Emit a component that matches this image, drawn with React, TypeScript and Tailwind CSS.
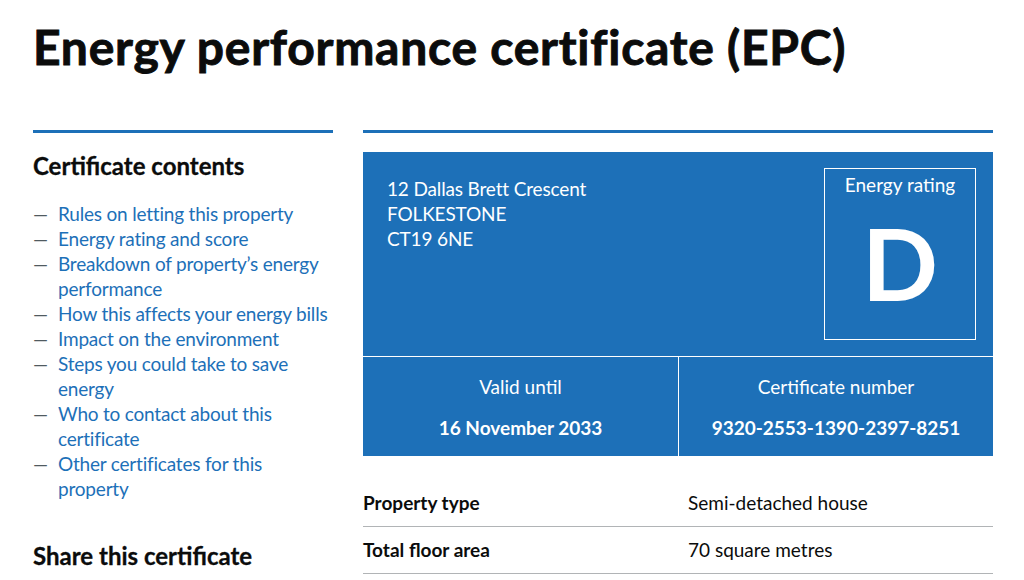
const contents: string[][] = [
  ['Rules on letting this property'],
  ['Energy rating and score'],
  ['Breakdown of property’s energy', 'performance'],
  ['How this affects your energy bills'],
  ['Impact on the environment'],
  ['Steps you could take to save', 'energy'],
  ['Who to contact about this', 'certificate'],
  ['Other certificates for this', 'property'],
]

const summary = [
  { key: 'Property type', value: 'Semi-detached house' },
  { key: 'Total floor area', value: '70 square metres' },
]

export default function App() {
  return (
    <div
      className="h-[580px] w-[1024px] overflow-hidden bg-white text-[#0b0c0c]"
      style={{ fontFamily: 'Lato, "Noto Sans", Arial, sans-serif' }}
    >
      <div className="mx-auto w-[960px] pl-px">
        <h1 className="mt-[22px] text-[48px] font-bold leading-[50px] tracking-[0.75px] [-webkit-text-stroke:0.9px_#0b0c0c]">
          Energy performance certificate (EPC)
        </h1>

        <div className="mt-[58px] flex gap-[30px]">
          <aside className="w-[300px] shrink-0 border-t-[3px] border-[#1d70b8]">
            <h2 className="mt-[18px] text-[24px] font-bold leading-[30px] [-webkit-text-stroke:0.3px_#0b0c0c]">
              Certificate contents
            </h2>
            <ul className="mt-5 text-[19px] leading-[25px] tracking-[-0.2px] text-[#1d70b8]">
              {contents.map((lines) => (
                <li key={lines[0]} className="flex">
                  <span className="w-[25px] shrink-0 text-[#505a5f]">—</span>
                  <a href="#" className="whitespace-nowrap">
                    {lines.map((l, i) => (
                      <span key={i} className="block">
                        {l}
                      </span>
                    ))}
                  </a>
                </li>
              ))}
            </ul>
            <h2 className="mt-10 text-[24px] font-bold leading-[30px] [-webkit-text-stroke:0.3px_#0b0c0c]">
              Share this certificate
            </h2>
          </aside>

          <main className="w-[630px] shrink-0 border-t-[3px] border-[#1d70b8]">
            <div className="mt-[19px] bg-[#1d70b8] text-white">
              <div className="flex h-[205px] justify-between border-b border-white">
                <p className="pl-6 pt-6 text-[19px] leading-[25px] tracking-[-0.15px]">
                  12 Dallas Brett Crescent
                  <br />
                  FOLKESTONE
                  <br />
                  CT19 6NE
                </p>
                <div className="mr-[17px] mt-4 flex h-[172px] w-[152px] flex-col items-center border border-white">
                  <span className="mt-[3px] text-[19px] leading-[25px]">Energy rating</span>
                  <span className="mt-[10px] text-[100px] font-bold leading-[110px]">D</span>
                </div>
              </div>
              <div className="flex h-[99px]">
                <div className="flex w-[316px] flex-col items-center border-r border-white pt-[17px]">
                  <span className="text-[19px] leading-[25px]">Valid until</span>
                  <span className="mt-4 text-[19px] font-bold leading-[25px]">16 November 2033</span>
                </div>
                <div className="flex flex-1 flex-col items-center pt-[17px]">
                  <span className="text-[19px] leading-[25px]">Certificate number</span>
                  <span className="mt-4 text-[19px] font-bold leading-[25px]">9320-2553-1390-2397-8251</span>
                </div>
              </div>
            </div>

            <dl className="mt-6 text-[19px] leading-[25px]">
              {summary.map((row) => (
                <div key={row.key} className="flex border-b border-[#b1b4b6] pb-[11px] pt-[10px]">
                  <dt className="w-[325px] shrink-0 font-bold">{row.key}</dt>
                  <dd>{row.value}</dd>
                </div>
              ))}
            </dl>
          </main>
        </div>
      </div>
    </div>
  )
}
